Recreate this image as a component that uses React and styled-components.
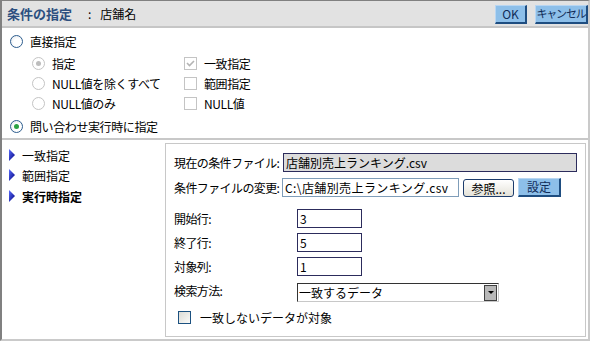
import styled, { createGlobalStyle } from "styled-components";

const GlobalStyle = createGlobalStyle`
  body {
    margin: 0;
    background: #fff;
    font-family: "Noto Sans CJK JP", "Liberation Sans", sans-serif;
    font-size: 12px;
    color: #000;
  }
`;

const Frame = styled.div`
  box-sizing: border-box;
  width: 590px;
  height: 341px;
  border-top: 1px solid #808080;
  border-left: 2px solid #808080;
  border-right: 2px solid #cacaca;
  border-bottom: 2px solid #cacaca;
  display: flex;
  flex-direction: column;
`;

const Header = styled.div`
  height: 25px;
  flex: none;
  background: #e2e2e2;
  border-bottom: 2px solid #c6c6c6;
  display: flex;
  align-items: center;
  padding: 0 0 0 5px;
`;

const Title = styled.span`
  font-size: 13px;
  font-weight: bold;
  color: #2c4f7f;
`;

const Field = styled.span`
  margin-left: 16px;
  font-size: 12px;
  span { margin-right: 9px; }
`;

const HeaderButtons = styled.div`
  margin-left: auto;
  display: flex;
  gap: 8px;
  padding-top: 1px;
`;

const BlueButton = styled.button`
  box-sizing: border-box;
  height: ${(p) => p.$h || 19}px;
  width: ${(p) => p.$w}px;
  padding: 0;
  font-family: inherit;
  font-size: ${(p) => p.$fs || 12}px;
  letter-spacing: ${(p) => p.$ls || 0}px;
  white-space: nowrap;
  color: #102c58;
  background: #8dbfe9;
  border: 1px solid;
  border-color: #b8d6f2 #1e4d80 #1e4d80 #b8d6f2;
  border-width: 1px 2px 2px 1px;
  line-height: 1;
`;

const TopSection = styled.div`
  height: 112px;
  flex: none;
  border-bottom: 2px solid #c8c8c8;
  padding: 6px 0 0 8px;
  box-sizing: border-box;
  letter-spacing: -0.4px;
`;

const OptionRow = styled.label`
  display: flex;
  align-items: center;
  gap: 7px;
  height: 15px;
  margin-top: ${(p) => p.$mt || 0}px;
`;

const SubGrid = styled.div`
  display: grid;
  grid-template-columns: 152px auto;
  grid-auto-rows: 20px;
  padding: 4px 0 0 22px;
  align-items: center;
`;

const Radio = styled.span`
  box-sizing: border-box;
  width: 13px;
  height: 13px;
  border-radius: 50%;
  border: 1px solid ${(p) => (p.$disabled ? "#c4c4c4" : "#2d5d8e")};
  background: ${(p) =>
    p.$disabled ? "#fff" : "radial-gradient(circle at 60% 60%, #fff 40%, #dde3ea 100%)"};
  display: inline-flex;
  align-items: center;
  justify-content: center;
  flex: none;
  &::after {
    content: "";
    display: ${(p) => (p.$checked ? "block" : "none")};
    width: 5px;
    height: 5px;
    border-radius: 50%;
    background: ${(p) => (p.$disabled ? "#bdbdbd" : "#2aa243")};
  }
`;

const Check = styled.span`
  box-sizing: border-box;
  width: 13px;
  height: 13px;
  border: 1px solid ${(p) => (p.$disabled ? "#c4c4c4" : "#1c5180")};
  background: ${(p) => (p.$disabled ? "#fff" : "linear-gradient(135deg, #dcdcd6, #fafaf8)")};
  flex: none;
  position: relative;
`;

const CheckMark = () => (
  <svg width="11" height="11" viewBox="0 0 11 11" style={{ position: "absolute", left: 0, top: 0 }}>
    <path d="M2 5 L4.5 7.5 L9 3" stroke="#b4b4b4" strokeWidth="1.6" fill="none" />
  </svg>
);

const Lower = styled.div`
  flex: 1;
  display: flex;
  min-height: 0;
`;

const SideNav = styled.ul`
  list-style: none;
  margin: 0;
  padding: 5px 0 0 6px;
  width: 157px;
`;

const NavItem = styled.li`
  display: flex;
  align-items: center;
  gap: 6px;
  height: ${(p) => (p.$tall ? 22 : 20)}px;
  font-weight: ${(p) => (p.$active ? "bold" : "normal")};
  font-size: 12px;
`;

const Arrow = () => (
  <svg width="8" height="12" viewBox="0 0 8 12">
    <defs>
      <linearGradient id="ag" x1="0" y1="0" x2="1" y2="1">
        <stop offset="0" stopColor="#5a6cff" />
        <stop offset="1" stopColor="#00007a" />
      </linearGradient>
    </defs>
    <polygon points="1,0 7,6 1,12" fill="url(#ag)" />
  </svg>
);

const Panel = styled.div`
  flex: 1;
  margin: 3px 2px 2px 0;
  border: 1px solid #c8c8c8;
  box-shadow: inset 1px 1px 0 #fff;
  padding: 9px 0 0 8px;
  box-sizing: border-box;
`;

const FileRow = styled.div`
  display: flex;
  align-items: center;
  height: 19px;
  margin-bottom: ${(p) => p.$mb || 0}px;
`;

const Label = styled.span`
  width: ${(p) => p.$w}px;
  flex: none;
  letter-spacing: -0.6px;
`;

const TextBox = styled.div`
  box-sizing: border-box;
  width: ${(p) => p.$w}px;
  height: 19px;
  border: 1px solid ${(p) => p.$border || "#2c2c5c"};
  background: ${(p) => p.$bg || "#fff"};
  padding: 0 2px;
  display: flex;
  align-items: center;
  letter-spacing: ${(p) => p.$ls || 0}px;
  white-space: nowrap;
  overflow: hidden;
`;

const BrowseButton = styled.button`
  box-sizing: border-box;
  margin-left: 4px;
  width: 51px;
  height: 18px;
  padding: 0;
  font-family: inherit;
  font-size: 12px;
  color: #000;
  border: 1px solid #1c3c6c;
  border-radius: 3px;
  background: linear-gradient(#ffffff, #e4e2d8);
`;

const NumGrid = styled.div`
  display: grid;
  grid-template-columns: 123px auto;
  grid-auto-rows: 19px;
  row-gap: 5px;
  align-items: center;
  margin-top: 12px;
`;

const Select = styled.div`
  box-sizing: border-box;
  width: 202px;
  height: 19px;
  margin-top: 4px;
  border: 1px solid #333;
  border-right-color: #c8c8c8;
  border-bottom-color: #c8c8c8;
  display: flex;
  align-items: center;
  justify-content: space-between;
  padding-left: 1px;
`;

const SelectArrow = styled.span`
  box-sizing: border-box;
  width: 13px;
  height: 16px;
  margin-right: 1px;
  background: #b8b8b8;
  border: 1px solid #404040;
  display: flex;
  align-items: center;
  justify-content: center;
  &::after {
    content: "";
    border-left: 3px solid transparent;
    border-right: 3px solid transparent;
    border-top: 3px solid #000;
  }
`;

const Option = styled.label`
  display: flex;
  align-items: center;
  gap: 9px;
  margin: 9px 0 0 4px;
`;

export default function App() {
  return (
    <>
      <GlobalStyle />
      <Frame>
        <Header>
          <Title>条件の指定</Title>
          <Field>
            <span>:</span>店舗名
          </Field>
          <HeaderButtons>
            <BlueButton $w={32}>OK</BlueButton>
            <BlueButton $w={53} $fs={11} $ls={-1.2}>
              キャンセル
            </BlueButton>
          </HeaderButtons>
        </Header>

        <TopSection>
          <OptionRow>
            <Radio />
            直接指定
          </OptionRow>
          <SubGrid>
            <OptionRow>
              <Radio $disabled $checked />
              指定
            </OptionRow>
            <OptionRow>
              <Check $disabled>
                <CheckMark />
              </Check>
              一致指定
            </OptionRow>
            <OptionRow>
              <Radio $disabled />
              NULL値を除くすべて
            </OptionRow>
            <OptionRow>
              <Check $disabled />
              範囲指定
            </OptionRow>
            <OptionRow>
              <Radio $disabled />
              NULL値のみ
            </OptionRow>
            <OptionRow>
              <Check $disabled />
              NULL値
            </OptionRow>
          </SubGrid>
          <OptionRow $mt={6}>
            <Radio $checked />
            問い合わせ実行時に指定
          </OptionRow>
        </TopSection>

        <Lower>
          <SideNav>
            <NavItem>
              <Arrow />
              一致指定
            </NavItem>
            <NavItem>
              <Arrow />
              範囲指定
            </NavItem>
            <NavItem $active $tall>
              <Arrow />
              実行時指定
            </NavItem>
          </SideNav>

          <Panel>
            <FileRow $mb={6}>
              <Label $w={109}>現在の条件ファイル:</Label>
              <TextBox $w={294} $bg="#dcdcdc" $border="#2c2c5c">
                店舗別売上ランキング.csv
              </TextBox>
            </FileRow>
            <FileRow>
              <Label $w={108}>条件ファイルの変更:</Label>
              <TextBox $w={177} $border="#7f9db9" $ls={0.4}>
                C:\店舗別売上ランキング.csv
              </TextBox>
              <BrowseButton>参照...</BrowseButton>
              <BlueButton $w={43} $h={19} style={{ marginLeft: 4 }}>
                設定
              </BlueButton>
            </FileRow>

            <NumGrid>
              <Label>開始行:</Label>
              <TextBox $w={65}>3</TextBox>
              <Label>終了行:</Label>
              <TextBox $w={65}>5</TextBox>
              <Label>対象列:</Label>
              <TextBox $w={65}>1</TextBox>
              <Label>検索方法:</Label>
              <Select>
                一致するデータ
                <SelectArrow />
              </Select>
            </NumGrid>

            <Option>
              <Check />
              一致しないデータが対象
            </Option>
          </Panel>
        </Lower>
      </Frame>
    </>
  );
}
